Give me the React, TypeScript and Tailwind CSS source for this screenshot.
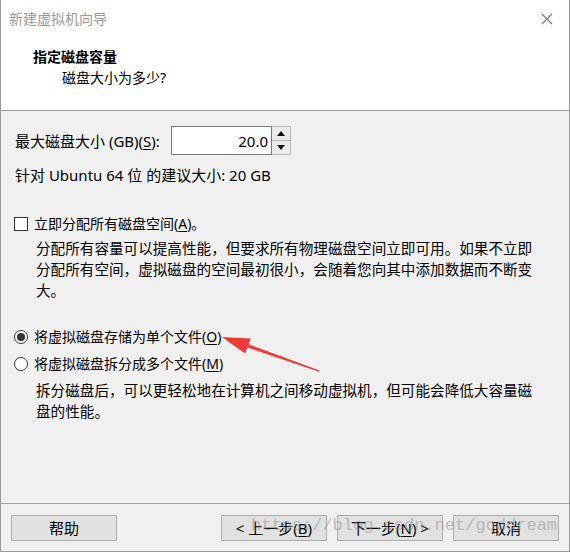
import React from "react";

const font = "font-['Noto_Sans','Noto_Sans_CJK_SC',sans-serif]";

function U({ children }: { children: React.ReactNode }) {
  return <span className="underline underline-offset-2">{children}</span>;
}

function Button({ children }: { children: React.ReactNode }) {
  return (
    <div className="w-[106px] h-[26px] bg-[#e1e1e1] border border-[#adadad] flex items-center justify-center text-[15px] leading-[20px] text-black">
      {children}
    </div>
  );
}

function Radio({ checked, children }: { checked?: boolean; children: React.ReactNode }) {
  return (
    <div className="flex items-center h-[20px] pl-[13px]">
      <div className="w-[14px] h-[14px] rounded-full border border-[#333] bg-white flex items-center justify-center">
        {checked && <div className="w-[8px] h-[8px] rounded-full bg-[#333]" />}
      </div>
      <span className="ml-[6px] text-[14px] leading-[20px]">{children}</span>
    </div>
  );
}

export default function App() {
  return (
    <div className={`relative w-[570px] h-[552px] overflow-hidden border-l border-r border-b border-[#9a9a9a] text-black ${font}`}>
      {/* header */}
      <div className="h-[111px] bg-white border-b border-[#a0a0a0]">
        <div className="flex items-center justify-between h-[38px] pl-[8px] pr-[16px]">
          <span className="text-[14px] leading-[20px] text-[#999]">新建虚拟机向导</span>
          <svg width="12" height="12" viewBox="0 0 12 12">
            <path d="M1 1 L11 11 M11 1 L1 11" stroke="#777" strokeWidth="1.1" />
          </svg>
        </div>
        <div className="pl-[32px] mt-[9px] text-[14px] leading-[20px] font-bold">指定磁盘容量</div>
        <div className="pl-[61px] mt-[1px] text-[14px] leading-[20px]">磁盘大小为多少?</div>
      </div>

      {/* body */}
      <div className="h-[392px] bg-[#f0f0f0] text-[15px]">
        <div className="flex items-center pt-[15px] pl-[14px]">
          <span className="leading-[20px] w-[156px]">
            最大磁盘大小 (GB)(<U>S</U>):
          </span>
          <div className="flex h-[29px]">
            <div className="w-[101px] h-full bg-white border border-[#7a7a7a] flex items-center justify-end pr-[3px] leading-[20px]">
              20.0
            </div>
            <div className="flex flex-col w-[19px] h-full border border-l-0 border-[#b9b9b9]">
              <div className="flex-1 bg-[#ececec] border-b border-[#b9b9b9] flex items-center justify-center">
                <svg width="8" height="5" viewBox="0 0 8 5"><path d="M0 5 L4 0 L8 5 Z" fill="#111" /></svg>
              </div>
              <div className="flex-1 bg-[#ececec] flex items-center justify-center">
                <svg width="8" height="5" viewBox="0 0 8 5"><path d="M0 0 L4 5 L8 0 Z" fill="#111" /></svg>
              </div>
            </div>
          </div>
        </div>
        <div className="pl-[14px] mt-[10px] leading-[20px]">针对 Ubuntu 64 位 的建议大小: 20 GB</div>

        <div className="flex items-center h-[20px] pl-[13px] mt-[29px]">
          <div className="w-[14px] h-[14px] border border-[#333] bg-white" />
          <span className="ml-[6px] text-[14px] leading-[20px]">
            立即分配所有磁盘空间(<U>A</U>)。
          </span>
        </div>
        <p className="pl-[35px] mt-[4px] text-[14.6px] leading-[21px]">
          分配所有容量可以提高性能，但要求所有物理磁盘空间立即可用。如果不立即
          <br />
          分配所有空间，虚拟磁盘的空间最初很小，会随着您向其中添加数据而不断变
          <br />
          大。
        </p>

        <div className="mt-[26px]">
          <Radio checked>
            将虚拟磁盘存储为单个文件(<U>O</U>)
          </Radio>
        </div>
        <div className="mt-[7px]">
          <Radio>
            将虚拟磁盘拆分成多个文件(<U>M</U>)
          </Radio>
        </div>
        <p className="pl-[35px] mt-[6px] text-[14.6px] leading-[21px]">
          拆分磁盘后，可以更轻松地在计算机之间移动虚拟机，但可能会降低大容量磁
          <br />
          盘的性能。
        </p>
      </div>

      {/* footer */}
      <div className="h-[48px] bg-[#f0f0f0] border-t border-[#a0a0a0] flex items-start pt-[11px] pl-[10px] pr-[10px]">
        <Button>帮助</Button>
        <div className="flex-1" />
        <div className="flex gap-[10px]">
          <Button>&lt; 上一步(<U>B</U>)</Button>
          <Button>下一步(<U>N</U>) &gt;</Button>
          <Button>取消</Button>
        </div>
      </div>

      {/* watermark */}
      <div className="absolute left-[250px] top-[516px] font-['Liberation_Mono',monospace] text-[17px] leading-[20px] text-[#909090]/55 pointer-events-none">
        https://blog.csdn.net/goddream
      </div>

      {/* red arrow annotation */}
      <svg className="absolute inset-0 pointer-events-none" width="570" height="552" viewBox="0 0 570 552">
        <polygon
          points="221,337 244,353.5 246.4,347.4 318,371.8 318.5,370.6 247.6,344.3 250,338.6"
          fill="#ee3b36"
        />
      </svg>
    </div>
  );
}
